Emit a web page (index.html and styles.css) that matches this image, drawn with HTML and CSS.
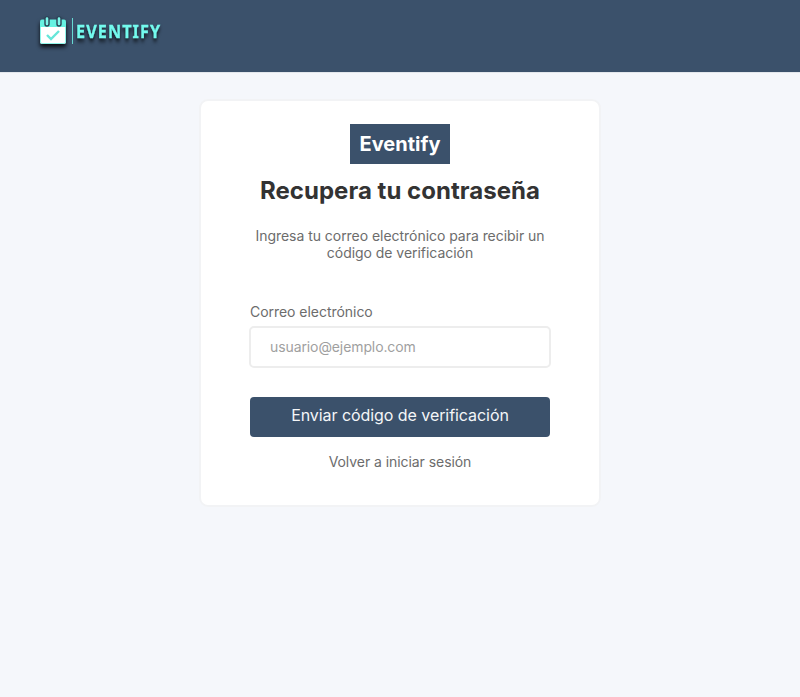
FILE: index.html
```html
<!DOCTYPE html>
<html lang="es">
<head>
<meta charset="utf-8">
<title>Eventify</title>
<link rel="stylesheet" href="styles.css">
</head>
<body>
<header class="header">
  <a class="logo">
    <svg class="logo-icon" width="26" height="28" viewBox="0 0 26 28">
      <path d="M2 2.500H24Q26 2.500 26 4.500V11H0V4.500Q0 2.500 2 2.500Z" fill="#66f2e2"/>
      <path d="M0 10H26V25Q26 27 24 27H2Q0 27 0 25Z" fill="#fff"/>
      <path d="M.5 10V25Q.5 26.500 2 26.500H24Q25.500 26.500 25.500 25V10" fill="none" stroke="#8ff5ea"/>
      <path d="M7 2V7M19 2V7" stroke="#2b4356" stroke-width="5.400" stroke-linecap="round"/>
      <path d="M7 1.500V7M19 1.500V7" stroke="#7df8ec" stroke-width="2.600" stroke-linecap="round"/>
      <path d="M7 18L11 22L19 14" fill="none" stroke="#66e6d9" stroke-width="2.400"/>
    </svg>
    <span class="logo-divider"></span>
    <span class="logo-text">EVENTIFY</span>
  </a>
</header>
<main class="card">
  <div class="brand">Eventify</div>
  <h1 class="title">Recupera tu contraseña</h1>
  <p class="intro">Ingresa tu correo electrónico para recibir un código de verificación</p>
  <form class="form">
    <label class="label" for="email">Correo electrónico</label>
    <input class="input" id="email" type="email" placeholder="usuario@ejemplo.com">
    <button class="submit" type="button">Enviar código de verificación</button>
  </form>
  <a class="back">Volver a iniciar sesión</a>
</main>
</body>
</html>
```

FILE: styles.css
```css
* { box-sizing: border-box; }
body {
  margin: 0;
  min-height: 697px;
  background: #f5f7fb;
  font-family: Inter, "Liberation Sans", sans-serif;
  color: #6c6c6c;
}
.header {
  height: 72px;
  padding: 17px 40px 0;
  background: #3b516b;
  box-shadow: 0 1px 0 #e3e7ec;
}
.logo {
  display: flex;
  align-items: flex-start;
}
.logo-icon {
  overflow: visible;
  filter: drop-shadow(0 3px 2px rgba(0, 0, 0, .85));
}
.logo-divider {
  width: 1px;
  height: 26px;
  margin: 1px 0 0 6px;
  background: #66d9d2;
}
.logo-text {
  margin: 1px 0 0 3px;
  font: 700 18px/26px "Noto Sans", sans-serif;
  letter-spacing: 1.2px;
  color: #73faee;
  transform: scaleX(.9);
  transform-origin: left;
  -webkit-text-stroke: .3px #73faee;
  filter: drop-shadow(0 3px 2px rgba(0, 0, 0, .75));
}
.card {
  display: flex;
  flex-direction: column;
  align-items: center;
  width: 402px;
  height: 408px;
  margin: 27px auto 0;
  padding: 23px 48px 0;
  background: #fff;
  border: 2px solid #f2f3f5;
  border-radius: 9px;
}
.brand {
  width: 100px;
  background: #3b516b;
  color: #fff;
  font-size: 20px;
  font-weight: 700;
  line-height: 40px;
  text-align: center;
}
.title {
  margin: 12px 0 0;
  color: #333;
  font-size: 24px;
  font-weight: 700;
  line-height: 29px;
  letter-spacing: .03px;
  white-space: nowrap;
}
.intro {
  width: 300px;
  margin: 22px 0 0;
  font-size: 14px;
  line-height: 17px;
  letter-spacing: -.04px;
  text-align: center;
}
.form {
  display: flex;
  flex-direction: column;
  width: 302px;
  margin-top: 42px;
}
.label {
  margin-left: 1px;
  font-size: 14px;
  line-height: 17px;
  letter-spacing: -.04px;
}
.input {
  height: 42px;
  margin: 6px 0 0;
  padding: 0 19px 2px;
  border: 2px solid #ededed;
  border-radius: 5px;
  background: #fff;
  font: 14px Inter, sans-serif;
  letter-spacing: -.1px;
}
.input::placeholder { color: #9f9f9f; }
.submit {
  height: 40px;
  margin: 29px 1px 0;
  padding: 0 0 4px;
  border: 0;
  border-radius: 4px;
  background: #3b516b;
  color: #f4f6f8;
  font: 16px Inter, sans-serif;
  letter-spacing: -.06px;
}
.back {
  margin-top: 16px;
  font-size: 14px;
  line-height: 17px;
  letter-spacing: -.06px;
}
```
